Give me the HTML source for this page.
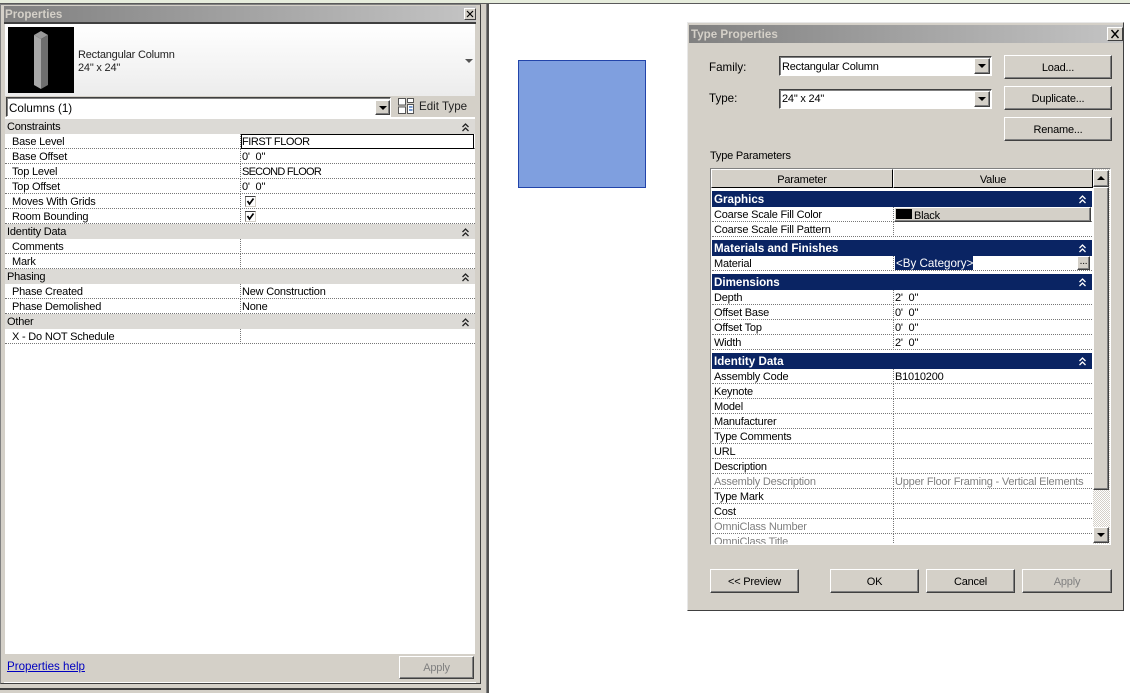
<!DOCTYPE html>
<html><head><meta charset="utf-8">
<style>
html,body{margin:0;padding:0;width:1130px;height:693px;overflow:hidden;background:#d4d0c8}
body{position:relative;font-family:"Liberation Sans",sans-serif;font-size:11px;letter-spacing:-.2px;color:#000}
div{position:absolute;box-sizing:border-box;white-space:pre;line-height:17px}
.w{font-size:11.6px;letter-spacing:0}
.btn{background:#d4d0c8;border:1px solid;border-color:#fff #404040 #404040 #fff;box-shadow:inset -1px -1px 0 #808080;text-align:center}
.sunk{background:#fff;border:1px solid;border-color:#404040 #fff #fff #404040;box-shadow:inset 1px 1px 0 #808080}
.arrow{background:#d4d0c8;border:1px solid;border-color:#fff #404040 #404040 #fff;box-shadow:inset -1px -1px 0 #808080}
.arrow:after{content:"";position:absolute;left:3px;top:5px;border:4px solid transparent;border-top:4px solid #000;border-bottom:0}
.up{background:#d4d0c8;border:1px solid;border-color:#fff #404040 #404040 #fff;box-shadow:inset -1px -1px 0 #808080}
.up:after{content:"";position:absolute;left:3px;top:5px;border:4px solid transparent;border-bottom:4px solid #000;border-top:0}
.title{background:linear-gradient(90deg,#808080,#c4c4c4);color:#d4d0c8;font-weight:bold;font-size:11.6px;letter-spacing:0;padding-left:1px}
.close{background:#d4d0c8;border:1px solid;border-color:#fff #404040 #404040 #fff}
.close svg{position:absolute;left:0;top:0}
.h{left:5px;width:470px;height:15px;background:#dcdad6;padding-left:2px}
.r{left:5px;width:470px;height:15px;background:#fff;border-bottom:1px dotted #777}
.r .a{left:7px;top:0}
.r .b{left:237px;top:0}
.r .s{left:235px;top:0;height:15px;width:0;border-left:1px dotted #777}
.g{left:712px;width:380px;height:16px;background:#0a2463;color:#fff;font-weight:bold;font-size:11.6px;letter-spacing:0;padding-left:2px;line-height:17px}
.t{left:712px;width:380px;height:15px;background:#fff;border-bottom:1px dotted #777;padding-left:2px}
.t .b{left:183px;top:0}
.t .s{left:181px;top:0;height:15px;width:0;border-left:1px dotted #777}
.dis{color:#808080}
.chev{position:absolute;width:7px;height:9px}
</style></head><body>
<svg width="0" height="0" style="position:absolute"><symbol id="c" viewBox="0 0 7 9"><path d="M0.5 4L3.5 1L6.5 4M0.5 8L3.5 5L6.5 8" fill="none" stroke="currentColor" stroke-width="1.3"/></symbol></svg>

<!-- frame -->
<div style="left:0;top:0;width:1130px;height:3px;background:#e6ecdc"></div>
<div style="left:0;top:3px;width:1130px;height:1px;background:#5a5a5a"></div>
<div style="left:0;top:4px;width:481px;height:680px;border:1px solid #808080;border-right-color:#404040;border-bottom-color:#404040;background:#d4d0c8"></div>
<div style="left:481px;top:4px;width:6px;height:689px;background:#d4d0c8;border-right:1px solid #808080"></div>
<div style="left:487px;top:4px;width:643px;height:689px;background:#fff;border-left:2px solid #505050"></div>
<div style="left:0;top:688px;width:481px;height:5px;background:#d4d0c8;border-top:2px solid #404040"></div>

<!-- properties panel -->
<div class="title" style="left:4px;top:6px;width:472px;height:16px;line-height:17px">Properties</div>
<div class="close" style="left:464px;top:8px;width:12px;height:12px"><svg width="10" height="10"><path d="M2 2L8 8M8 2L2 8" stroke="#000" stroke-width="1.2"/></svg></div>
<div style="left:4px;top:22px;width:472px;height:2px;background:#404040"></div>
<div style="left:5px;top:24px;width:470px;height:72px;background:linear-gradient(#fff,#ececec)"></div>
<div style="left:8px;top:27px;width:66px;height:66px;background:#000"></div>
<svg style="position:absolute;left:8px;top:27px" width="66" height="66"><path d="M26 8L33 4L40 8L33 12Z" fill="#9a9a9a"/><path d="M26 8L33 12V62L26 58Z" fill="#a8a8a8"/><path d="M33 12L40 8V58L33 62Z" fill="#6e6e6e"/></svg>
<div style="left:78px;top:47px;color:#222">Rectangular Column</div>
<div style="left:78px;top:60px;color:#222">24" x 24"</div>
<div style="left:465px;top:59px;border:4px solid transparent;border-top:4px solid #555;border-bottom:0"></div>

<div class="sunk w" style="left:6px;top:97px;width:385px;height:20px;padding:2px 0 0 2px">Columns (1)</div>
<div class="arrow" style="left:375px;top:100px;width:15px;height:15px"></div>
<svg style="position:absolute;left:397px;top:97px" width="18" height="18"><path d="M1.5 1.5H8.5V8H1.5ZM10.5 1.5H16.5V5.5H10.5ZM1.5 10H8.5V16.5H1.5Z" fill="#fff" stroke="#555"/><path d="M10.5 7.5H16.5V16.5H10.5Z" fill="#fff" stroke="#555"/><path d="M12 10H15.5M12 13H15.5" stroke="#2a5fb0" stroke-width="1.2"/></svg>
<div class="w" style="left:419px;top:98px;color:#222">Edit Type</div>

<div style="left:5px;top:117px;width:470px;height:537px;background:#fff"></div>
<div class="h" style="top:119px">Constraints<svg class="chev" style="left:457px;top:4px;color:#222"><use href="#c"/></svg></div>
<div class="r" style="top:134px"><div class="a">Base Level</div><div class="s"></div></div>
<div style="left:241px;top:134px;width:233px;height:15px;border:1px solid #000;background:#fff;padding-left:0;line-height:15px;letter-spacing:-.45px">FIRST FLOOR</div>
<div class="r" style="top:149px"><div class="a">Base Offset</div><div class="s"></div><div class="b">0'  0"</div></div>
<div class="r" style="top:164px"><div class="a">Top Level</div><div class="s"></div><div class="b" style="letter-spacing:-.75px">SECOND FLOOR</div></div>
<div class="r" style="top:179px"><div class="a">Top Offset</div><div class="s"></div><div class="b">0'  0"</div></div>
<div class="r" style="top:194px"><div class="a">Moves With Grids</div><div class="s"></div></div>
<div class="r" style="top:209px"><div class="a">Room Bounding</div><div class="s"></div></div>
<svg style="position:absolute;left:245px;top:196px" width="11" height="11"><rect width="11" height="11" fill="#d4d0c8"/><rect x="1" y="1" width="9" height="9" fill="#fff"/><path d="M0 10.5V.5H10.5" fill="none" stroke="#404040"/><path d="M2.5 5L4.5 8L8.5 2.5" fill="none" stroke="#000" stroke-width="1.7"/></svg>
<svg style="position:absolute;left:245px;top:211px" width="11" height="11"><rect width="11" height="11" fill="#d4d0c8"/><rect x="1" y="1" width="9" height="9" fill="#fff"/><path d="M0 10.5V.5H10.5" fill="none" stroke="#404040"/><path d="M2.5 5L4.5 8L8.5 2.5" fill="none" stroke="#000" stroke-width="1.7"/></svg>
<div class="h" style="top:224px">Identity Data<svg class="chev" style="left:457px;top:4px;color:#222"><use href="#c"/></svg></div>
<div class="r" style="top:239px"><div class="a">Comments</div><div class="s"></div></div>
<div class="r" style="top:254px"><div class="a">Mark</div><div class="s"></div></div>
<div class="h" style="top:269px">Phasing<svg class="chev" style="left:457px;top:4px;color:#222"><use href="#c"/></svg></div>
<div class="r" style="top:284px"><div class="a">Phase Created</div><div class="s"></div><div class="b">New Construction</div></div>
<div class="r" style="top:299px"><div class="a">Phase Demolished</div><div class="s"></div><div class="b">None</div></div>
<div class="h" style="top:314px">Other<svg class="chev" style="left:457px;top:4px;color:#222"><use href="#c"/></svg></div>
<div class="r" style="top:329px"><div class="a">X - Do NOT Schedule</div><div class="s"></div></div>

<div style="left:5px;top:654px;width:470px;height:28px;background:#d4d0c8"></div>
<div class="w" style="left:7px;top:658px;color:#0000c0;text-decoration:underline">Properties help</div>
<div class="btn" style="left:399px;top:656px;width:75px;height:23px;color:#808080;line-height:22px">Apply</div>
<div style="left:4px;top:682px;width:472px;height:1px;background:#fff"></div>

<!-- blue square -->
<div style="left:518px;top:60px;width:128px;height:128px;background:#7f9fdf;border:1px solid #2244aa"></div>

<!-- dialog -->
<div style="left:687px;top:22px;width:437px;height:589px;background:#d4d0c8;border:1px solid;border-color:#e8e8e8 #404040 #404040 #e8e8e8"></div>
<div class="title" style="left:689px;top:25px;width:434px;height:18px;line-height:19px;padding-left:2px">Type Properties</div>
<div class="close" style="left:1107px;top:27px;width:16px;height:14px"><svg width="14" height="12"><path d="M3.5 2L10.5 10M10.5 2L3.5 10" stroke="#000" stroke-width="1.4"/></svg></div>

<div class="w" style="left:709px;top:59px">Family:</div>
<div class="w" style="left:709px;top:90px">Type:</div>
<div class="sunk" style="left:779px;top:56px;width:213px;height:20px;padding:2px 0 0 2px">Rectangular Column</div>
<div class="arrow" style="left:974px;top:58px;width:16px;height:16px"></div>
<div class="sunk" style="left:779px;top:89px;width:213px;height:20px;padding:1px 0 0 2px">24" x 24"</div>
<div class="arrow" style="left:974px;top:91px;width:16px;height:16px"></div>
<div class="btn" style="left:1004px;top:55px;width:108px;height:24px;line-height:24px">Load...</div>
<div class="btn" style="left:1004px;top:86px;width:108px;height:24px;line-height:24px">Duplicate...</div>
<div class="btn" style="left:1004px;top:117px;width:108px;height:24px;line-height:24px">Rename...</div>
<div style="left:710px;top:148px">Type Parameters</div>

<div style="left:710px;top:168px;width:401px;height:377px;background:#fff;border:1px solid;border-color:#808080 #fff #fff #808080"></div>
<div class="btn" style="left:711px;top:169px;width:182px;height:19px;line-height:20px;border-color:#fff #000 #000 #fff;box-shadow:none">Parameter</div>
<div class="btn" style="left:893px;top:169px;width:200px;height:19px;line-height:20px;border-color:#fff #000 #000 #fff;box-shadow:none">Value</div>

<div class="g" style="top:191px">Graphics<svg class="chev" style="left:367px;top:4px;color:#fff"><use href="#c"/></svg></div>
<div class="t" style="top:207px">Coarse Scale Fill Color<div class="s"></div></div>
<div class="btn" style="left:894px;top:207px;width:197px;height:15px;padding-left:19px;text-align:left;line-height:16px">Black</div>
<div style="left:896px;top:209px;width:16px;height:10px;background:#000"></div>
<div class="t" style="top:222px">Coarse Scale Fill Pattern<div class="s"></div></div>
<div class="g" style="top:240px">Materials and Finishes<svg class="chev" style="left:367px;top:4px;color:#fff"><use href="#c"/></svg></div>
<div class="t" style="top:256px">Material<div class="s"></div></div>
<div class="w" style="left:895px;top:256px;width:78px;height:14px;background:#0a2463;color:#fff;line-height:15px;padding-left:1px">&lt;By Category&gt;</div>
<div class="btn" style="left:1077px;top:256px;width:13px;height:14px;line-height:10px;font-size:10px">...</div>
<div class="g" style="top:274px">Dimensions<svg class="chev" style="left:367px;top:4px;color:#fff"><use href="#c"/></svg></div>
<div class="t" style="top:290px">Depth<div class="s"></div><div class="b">2'  0"</div></div>
<div class="t" style="top:305px">Offset Base<div class="s"></div><div class="b">0'  0"</div></div>
<div class="t" style="top:320px">Offset Top<div class="s"></div><div class="b">0'  0"</div></div>
<div class="t" style="top:335px">Width<div class="s"></div><div class="b">2'  0"</div></div>
<div class="g" style="top:353px">Identity Data<svg class="chev" style="left:367px;top:4px;color:#fff"><use href="#c"/></svg></div>
<div class="t" style="top:369px">Assembly Code<div class="s"></div><div class="b">B1010200</div></div>
<div class="t" style="top:384px">Keynote<div class="s"></div></div>
<div class="t" style="top:399px">Model<div class="s"></div></div>
<div class="t" style="top:414px">Manufacturer<div class="s"></div></div>
<div class="t" style="top:429px">Type Comments<div class="s"></div></div>
<div class="t" style="top:444px">URL<div class="s"></div></div>
<div class="t" style="top:459px">Description<div class="s"></div></div>
<div class="t dis" style="top:474px">Assembly Description<div class="s"></div><div class="b">Upper Floor Framing - Vertical Elements</div></div>
<div class="t" style="top:489px">Type Mark<div class="s"></div></div>
<div class="t" style="top:504px">Cost<div class="s"></div></div>
<div class="t dis" style="top:519px">OmniClass Number<div class="s"></div></div>
<div class="t dis" style="top:534px;height:10px;overflow:hidden;border-bottom:0">OmniClass Title<div class="s"></div></div>

<!-- scrollbar -->
<div style="left:1093px;top:169px;width:17px;height:375px;background:repeating-conic-gradient(#fff 0 25%,#d4d0c8 0 50%) 0 0/2px 2px"></div>
<div class="up" style="left:1093px;top:170px;width:16px;height:17px"></div>
<div class="btn" style="left:1093px;top:187px;width:16px;height:303px"></div>
<div class="arrow" style="left:1093px;top:527px;width:16px;height:16px"></div>

<div class="btn" style="left:710px;top:569px;width:89px;height:24px;line-height:24px">&lt;&lt; Preview</div>
<div class="btn" style="left:830px;top:569px;width:89px;height:24px;line-height:24px">OK</div>
<div class="btn" style="left:926px;top:569px;width:89px;height:24px;line-height:24px">Cancel</div>
<div class="btn" style="left:1022px;top:569px;width:90px;height:24px;line-height:24px;color:#808080">Apply</div>
</body></html>
